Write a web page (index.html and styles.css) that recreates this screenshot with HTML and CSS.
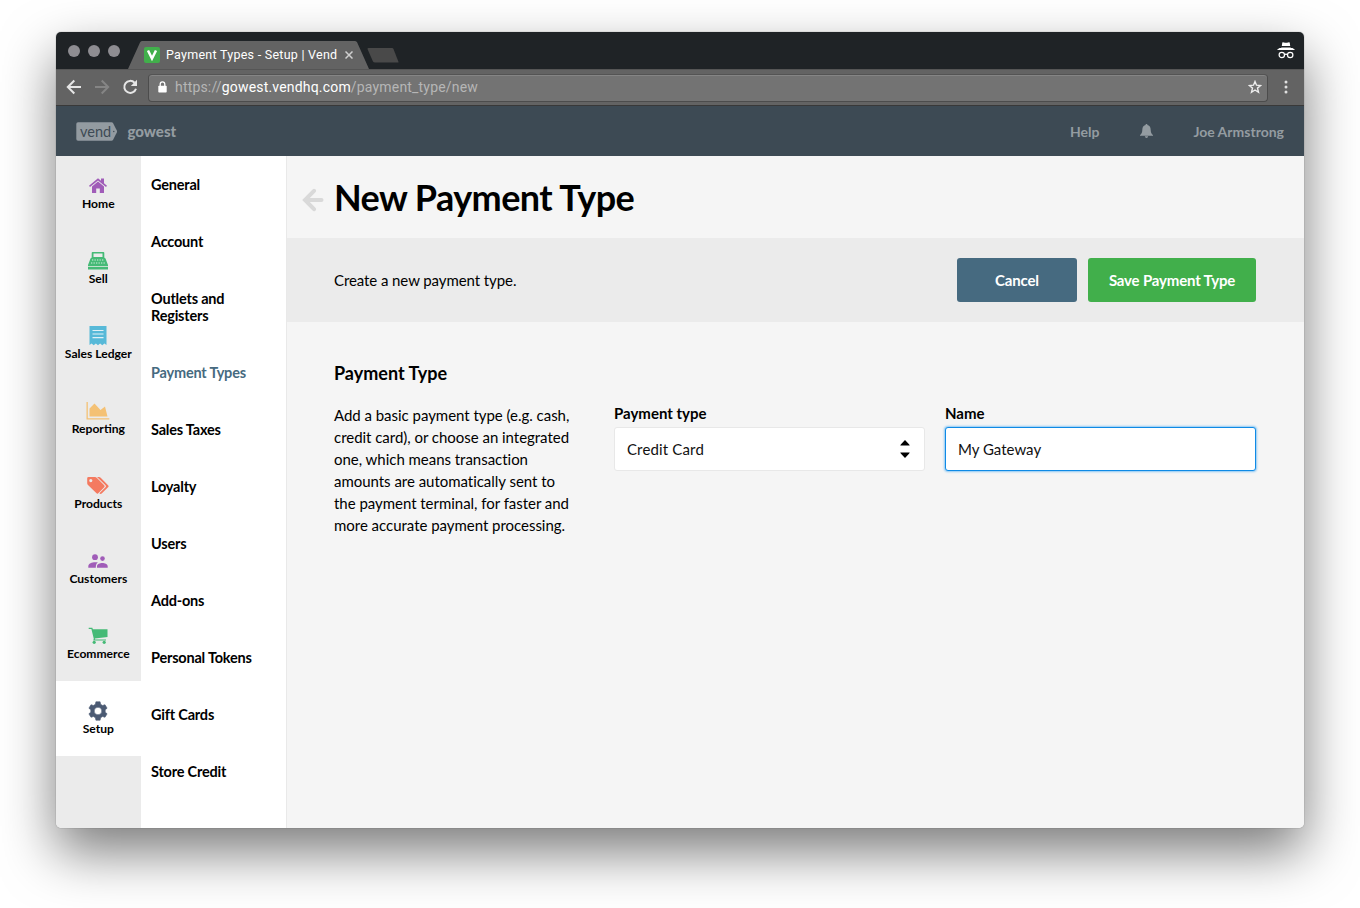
FILE: index.html
```html
<!DOCTYPE html>
<html lang="en">
<head>
<meta charset="utf-8">
<title>Payment Types - Setup | Vend</title>
<link rel="stylesheet" href="styles.css">
</head>
<body>
<div class="window">
  <div class="tabstrip">
    <div class="lights"><i></i><i></i><i></i></div>
    <div class="tab">
      <svg class="tab-shape" width="242" height="28" viewBox="0 0 242 28"><path d="M0 28 L12 1.5 Q12.600 0 14 0 H227 Q228.600 0 229.200 1.500 L241 28Z" fill="#636363"/></svg>
      <svg class="favicon" width="16" height="16" viewBox="0 0 16 16"><rect width="16" height="16" rx="2" fill="#41af4b"/><path d="M4 3.500 8 11.500 12 3.500" fill="none" stroke="#fff" stroke-width="2.500"/></svg>
      <span class="tab-title">Payment Types - Setup | Vend</span>
      <svg class="tab-close" width="8" height="8" viewBox="0 0 8 8"><path d="M.5.5 7.500 7.500M7.500.5.5 7.500" stroke="#d0d0d0" stroke-width="1.500"/></svg>
    </div>
    <svg class="newtab" width="32" height="15" viewBox="0 0 32 15"><path d="M1.500 0H25Q26 0 26.500 1L31.500 14Q31.500 14.500 31 14.500H8Q6.500 14.500 6 13.500L.5 1Q.5 0 1.500 0Z" fill="#494949"/></svg>
    <svg class="incognito" width="18" height="17" viewBox="0 0 18 17"><path fill="#fff" d="M5.300.5 Q6 0 7 .6 Q9 1 11 .6 Q12 0 12.700.5 L13.200 4H4.800ZM4.500 5.500H13.500L14 6H15.500L17.700 7.500V8H.3V7.500L2.500 6H4Z"/><g fill="none" stroke="#fff" stroke-width="1.200"><circle cx="4.800" cy="13" r="2.700"/><circle cx="13.200" cy="13" r="2.700"/><path d="M7.500 12.700Q9 11.500 10.500 12.700"/></g></svg>
  </div>
  <div class="toolbar">
    <svg class="tool" width="16" height="16" viewBox="0 0 16 16"><path d="M15 8H2M8.300 1.500 1.800 8l6.500 6.500" fill="none" stroke="#e6e6e6" stroke-width="2"/></svg>
    <svg class="tool" width="16" height="16" viewBox="0 0 16 16"><path d="M1 8h13M7.700 1.500 14.200 8l-6.500 6.500" fill="none" stroke="#858585" stroke-width="2"/></svg>
    <svg class="tool" width="16" height="16" viewBox="0 0 16 16"><path d="M12.600 3.700A6 6 0 1 0 14 9.700" fill="none" stroke="#e6e6e6" stroke-width="2"/><path d="M15 .8V7H8.800Z" fill="#e6e6e6"/></svg>
    <div class="omnibox">
      <svg class="lock" width="9" height="12" viewBox="0 0 9 12"><rect x=".3" y="4.800" width="8.400" height="6.700" rx=".8" fill="#fff"/><path d="M2.200 5.500V3.200a2.300 2.300 0 0 1 4.600 0V5.500" fill="none" stroke="#fff" stroke-width="1.300"/></svg>
      <span class="url">https://<b>gowest.vendhq.com</b>/payment_type/new</span>
      <svg class="star" width="14" height="14" viewBox="0 0 14 14"><path d="M7 1.500 8.500 5.200 12.600 5.500 9.500 8.100 10.500 12.300 7 10 3.500 12.300 4.500 8.100 1.400 5.500 5.500 5.200Z" fill="none" stroke="#eee" stroke-width="1.400"/></svg>
    </div>
    <svg class="dots" width="4" height="14" viewBox="0 0 4 14"><g fill="#e0e0e0"><circle cx="2" cy="2" r="1.500"/><circle cx="2" cy="7" r="1.500"/><circle cx="2" cy="12" r="1.500"/></g></svg>
  </div>
  <header class="header">
    <div class="logo">
      <svg width="42" height="19" viewBox="0 0 42 19"><path d="M2 .3H35.500Q36.500.3 37 1L40.800 8.500Q41.300 9.500 40.800 10.500L37 18Q36.500 18.700 35.500 18.700H2Q.3 18.700.3 17V2Q.3.3 2 .3Z" fill="#939ba1"/><circle cx="37.800" cy="9.500" r=".7" fill="#3d4a54"/></svg>
      <span>vend</span>
    </div>
    <strong class="store">gowest</strong>
    <span class="help">Help</span>
    <svg class="bell" width="13" height="14" viewBox="0 0 13 14"><path d="M6.500 0C7.200 0 7.500.5 7.500 1.100 10 1.800 10.600 3.700 10.700 6 10.800 8.500 11.500 10 13 11V11.700H0V11C1.500 10 2.200 8.500 2.300 6 2.400 3.700 3 1.800 5.500 1.100 5.500.5 5.800 0 6.500 0ZM4.800 12.300H8.200Q7.900 14 6.500 14T4.800 12.300Z" fill="#949ca1"/></svg>
    <span class="user">Joe Armstrong</span>
  </header>
  <div class="body">
    <nav class="primary">
      <a><svg width="24" height="20" viewBox="0 0 24 20"><path fill="#a05cb8" d="M3 9.800 12 2.300 15 4.800V2.500H18V7.300L21 9.800 20 11 12 4.400 4 11ZM6 10.500 12 5.600 18 10.500V17H13.800V12.500H10.200V17H6Z"/></svg>Home</a>
      <a><svg width="24" height="20" viewBox="0 0 24 20"><path fill="#45ba76" fill-rule="evenodd" d="M6.500 1H17.500Q18.300 1 18.300 2V6.500L19.500 7.500 22 14V15H2V14L4.500 7.500 5.700 6.500V2Q5.700 1 6.500 1ZM7.500 2.600V6H16.500V2.600ZM2 15.700H22V18.500H2Z"/><path d="M6 9H18.500M5 12H19.500" stroke="#d5f0e0" stroke-width="1.100" stroke-dasharray="1.300 1.200"/></svg>Sell</a>
      <a><svg width="24" height="20" viewBox="0 0 24 20"><path fill="#57b9d8" d="M3.500 0H20.500V19L18.400 17.500 16.300 19.300 14.100 17.500 12 19.300 9.900 17.500 7.700 19.300 5.600 17.500 3.500 19Z"/><path d="M6.500 4.500H17.500M6.500 8H17.500M6.500 11.700H17.500" stroke="#e2f1f6" stroke-width="1.200"/></svg>Sales Ledger</a>
      <a><svg width="24" height="20" viewBox="0 0 24 20"><path fill="#f4c174" d="M.5 1H1.800V17.200H23.300V18.500H.5ZM3.500 7.500 8.500 2.500 14.500 9 19 5.500 21.500 15.500H3.500Z"/></svg>Reporting</a>
      <a><svg width="24" height="20" viewBox="0 0 24 20"><path fill="#f47a60" fill-rule="evenodd" d="M2.500 1H9Q10 1 10.700 1.700L18.200 9.200Q19.200 10.200 18.200 11.200L12 17.400Q11.300 18 10.500 17.300L2 9Q1.200 8.300 1.200 7.300V2.300Q1.200 1 2.500 1ZM4.800 3A1.600 1.600 0 1 0 4.800 6.200 1.600 1.600 0 1 0 4.800 3ZM11 1H13Q14 1 14.700 1.700L22.300 9.400Q23 10.200 22.300 11L15.700 17.500Q14.500 18.500 13.400 17.300L19.500 11.200Q20.500 10.200 19.500 9.200Z"/></svg>Products</a>
      <a><svg width="24" height="20" viewBox="0 0 24 20"><g fill="#a05cb8" transform="translate(0 .9)"><circle cx="9" cy="5.300" r="2.900"/><circle cx="16.500" cy="6.700" r="2.300"/><path d="M2.300 15.800V14.500C2.300 11.500 6 10.300 9 10.300 10 10.300 11.200 10.500 12 10.700 10.300 11.700 9.800 13.300 9.800 15.800ZM11 15.800V14.300C11 12 14 11 16.300 11S21.700 12 21.700 14.300V15.800Z"/></g></svg>Customers</a>
      <a><svg width="24" height="20" viewBox="0 0 24 20"><path fill="#45ba76" d="M2.700 1.700H6.300L6.900 3.200H21.500V11L8.800 12.500 9.200 13.400H20V14.600H7.200L7.800 12.800 5.400 2.900H2.700Z"/><circle cx="8.200" cy="16.300" r="1.600" fill="#45ba76"/><circle cx="18.200" cy="16.300" r="1.600" fill="#45ba76"/></svg>Ecommerce</a>
      <a class="active"><svg width="24" height="20" viewBox="0 0 24 20"><path fill="#4b5a73" stroke="#4b5a73" stroke-width=".6" stroke-linejoin="round" fill-rule="evenodd" d="M9.900.8H14.100L14.600 3.300 16.600 4.500 19 3.700 21.100 7.200 19.200 8.800V11.200L21.100 12.800 19 16.300 16.600 15.500 14.600 16.700 14.100 19.200H9.900L9.400 16.700 7.400 15.500 5 16.300 2.900 12.800 4.800 11.200V8.800L2.900 7.200 5 3.700 7.400 4.500 9.400 3.300ZM12 6.200A3.800 3.800 0 1 0 12 13.800 3.800 3.800 0 1 0 12 6.200Z"/></svg>Setup</a>
    </nav>
    <nav class="secondary">
      <a>General</a><a>Account</a><a>Outlets and Registers</a><a class="current">Payment Types</a><a>Sales Taxes</a><a>Loyalty</a><a>Users</a><a>Add-ons</a><a>Personal Tokens</a><a>Gift Cards</a><a>Store Credit</a>
    </nav>
    <main class="main">
      <div class="heading">
        <svg width="22" height="24" viewBox="0 0 22 24"><path d="M19.500 12H3M12 2.800 3 12l9 9.200" fill="none" stroke="#d9d9d9" stroke-width="4" stroke-linecap="round"/></svg>
        <h1>New Payment Type</h1>
      </div>
      <div class="actions">
        <p>Create a new payment type.</p>
        <button class="btn cancel">Cancel</button>
        <button class="btn save">Save Payment Type</button>
      </div>
      <section class="form">
        <h2>Payment Type</h2>
        <div class="columns">
          <p class="about">Add a basic payment type (e.g. cash,<br>credit card), or choose an integrated<br>one, which means transaction<br>amounts are automatically sent to<br>the payment terminal, for faster and<br>more accurate payment processing.</p>
          <div class="field"><label>Payment type</label>
            <div class="control"><span class="wide">Credit Card</span><svg width="10" height="18" viewBox="0 0 10 18"><path d="M.3 5.500Q.3 5 1 4.300L5 0 9 4.300Q9.700 5 9.700 5.500ZM.3 12.500H9.700Q9.700 13 9 13.700L5 18 1 13.700Q.3 13 .3 12.500Z"/></svg></div>
          </div>
          <div class="field"><label>Name</label>
            <div class="control focused"><span>My Gateway</span></div>
          </div>
        </div>
      </section>
    </main>
  </div>
</div>
</body>
</html>
```
FILE: styles.css
```css
* { box-sizing: border-box; }
body { margin: 0; height: 908px; padding: 32px 56px 80px; background: #fff; font-family: Lato, sans-serif; color: #000; overflow: hidden; }
svg { display: block; flex: none; }
p, h1, h2 { margin: 0; }
.window { height: 796px; display: flex; flex-direction: column; border-radius: 5px; box-shadow: 0 0 1px rgba(0,0,0,.6), 0 24px 54px rgba(0,0,0,.52); white-space: nowrap; }
.tabstrip { height: 37px; display: flex; align-items: center; background: #1f2326; border-radius: 5px 5px 0 0; padding-left: 12px; }
.lights { display: flex; gap: 8px; }
.lights i { width: 12px; height: 12px; border-radius: 50%; background: #8e8d92; }
.tab { position: relative; align-self: flex-end; width: 242px; height: 28px; margin-left: 8px; display: flex; align-items: center; padding-left: 16px; font: 12.5px Roboto, sans-serif; letter-spacing: .26px; color: #fff; }
.tab-shape { position: absolute; left: 0; top: 0; }
.favicon, .tab-title, .tab-close { position: relative; }
.tab-title { margin-left: 6px; width: 171px; padding-bottom: 2px; }
.tab-close { margin-left: 8px; }
.newtab { margin: 10px 0 0 -3px; }
.incognito { margin-left: auto; margin-right: 9px; }
.toolbar { height: 37px; background: #636363; border-top: 1px solid #555; border-bottom: 1px solid #393939; display: flex; align-items: center; padding: 0 0 1px 10px; }
.tool { margin-right: 12px; }
.omnibox { height: 28px; flex: 1; margin: 1px 0 0 -2px; border: 1px solid #4c4c4c; border-top-color: #545454; border-radius: 4px; background: #737373; box-shadow: inset 0 1px #858585; display: flex; align-items: center; padding: 0 5px 1px 9px; }
.url { margin-left: 8px; font: 14px Roboto, sans-serif; letter-spacing: .18px; color: #b6b6b6; }
.url b { font-weight: 400; color: #fff; }
.star { margin-left: auto; }
.dots { margin: 0 16px; }
.header { height: 50px; background: #3d4a54; color: #949ca1; display: flex; align-items: center; padding: 1px 20px 0; font-size: 14px; font-weight: 700; }
.logo { position: relative; width: 42px; height: 19px; }
.logo span { position: absolute; left: 4px; top: 1px; font-size: 14.5px; line-height: 17px; font-weight: 400; color: #3d4a54; }
.store { margin: -2px 0 0 9.5px; font-size: 15px; }
.help { margin-left: auto; }
.bell { margin: -2px 40px 0 41px; }
.body { flex: 1; display: flex; min-height: 0; }
.primary { width: 85px; background: #ebebeb; border-radius: 0 0 0 5px; }
.primary a { height: 75px; padding: 20px .4px 0 0; display: flex; flex-direction: column; align-items: center; font-size: 12.1px; line-height: 15px; font-weight: 700; }
.primary svg { margin-left: -.6px; }
.primary .active { background: #fff; }
.secondary { width: 146px; background: #fff; border-right: 1px solid #e9e9e9; font-size: 14.5px; letter-spacing: -.2px; line-height: 17px; font-weight: 700; white-space: normal; }
.secondary a { display: block; padding: 20px 40px 20px 10px; }
.secondary a.current, .secondary a:nth-child(9) { white-space: nowrap; }
.secondary .current { color: #466a80; }
.main { flex: 1; background: #f5f5f5; border-radius: 0 0 5px 0; }
.heading { height: 82px; display: flex; align-items: center; padding: 5px 0 0 15px; }
.heading h1 { margin: -5px 0 0 10px; font-size: 36px; line-height: 44px; letter-spacing: -.56px; }
.actions { height: 84px; background: #ebebeb; display: flex; align-items: center; padding: 0 48px 0 47px; font-size: 15px; }
.actions p { flex: 1; letter-spacing: -.08px; }
.btn { height: 44px; border: 0; border-radius: 3px; padding: 0 0 1px; color: #fff; font: 700 15px Lato, sans-serif; letter-spacing: -.17px; }
.cancel { width: 120px; background: #466a80; margin-right: 11px; }
.save { width: 168px; background: #41af4b; }
.form { padding: 39px 48px 0 47px; }
.form h2 { font-size: 18px; line-height: 24px; }
.columns { display: grid; grid-template-columns: 260px 311px 311px; column-gap: 20px; padding-top: 19px; }
.about { font-size: 15px; line-height: 22px; letter-spacing: -.03px; }
.field label { display: block; font-size: 15px; line-height: 18px; padding-bottom: 2px; font-weight: 700; }
.control { height: 44px; margin-top: 3px; border: 1px solid #e8e8e8; border-radius: 3px; background: #fff; display: flex; align-items: center; justify-content: space-between; padding: 0 14px 0 12px; font-size: 15px; color: #111; }
.wide { letter-spacing: .15px; }
.focused { border-color: #0f8ae5; box-shadow: 0 0 2px 1px #8cc8f4; }
```
